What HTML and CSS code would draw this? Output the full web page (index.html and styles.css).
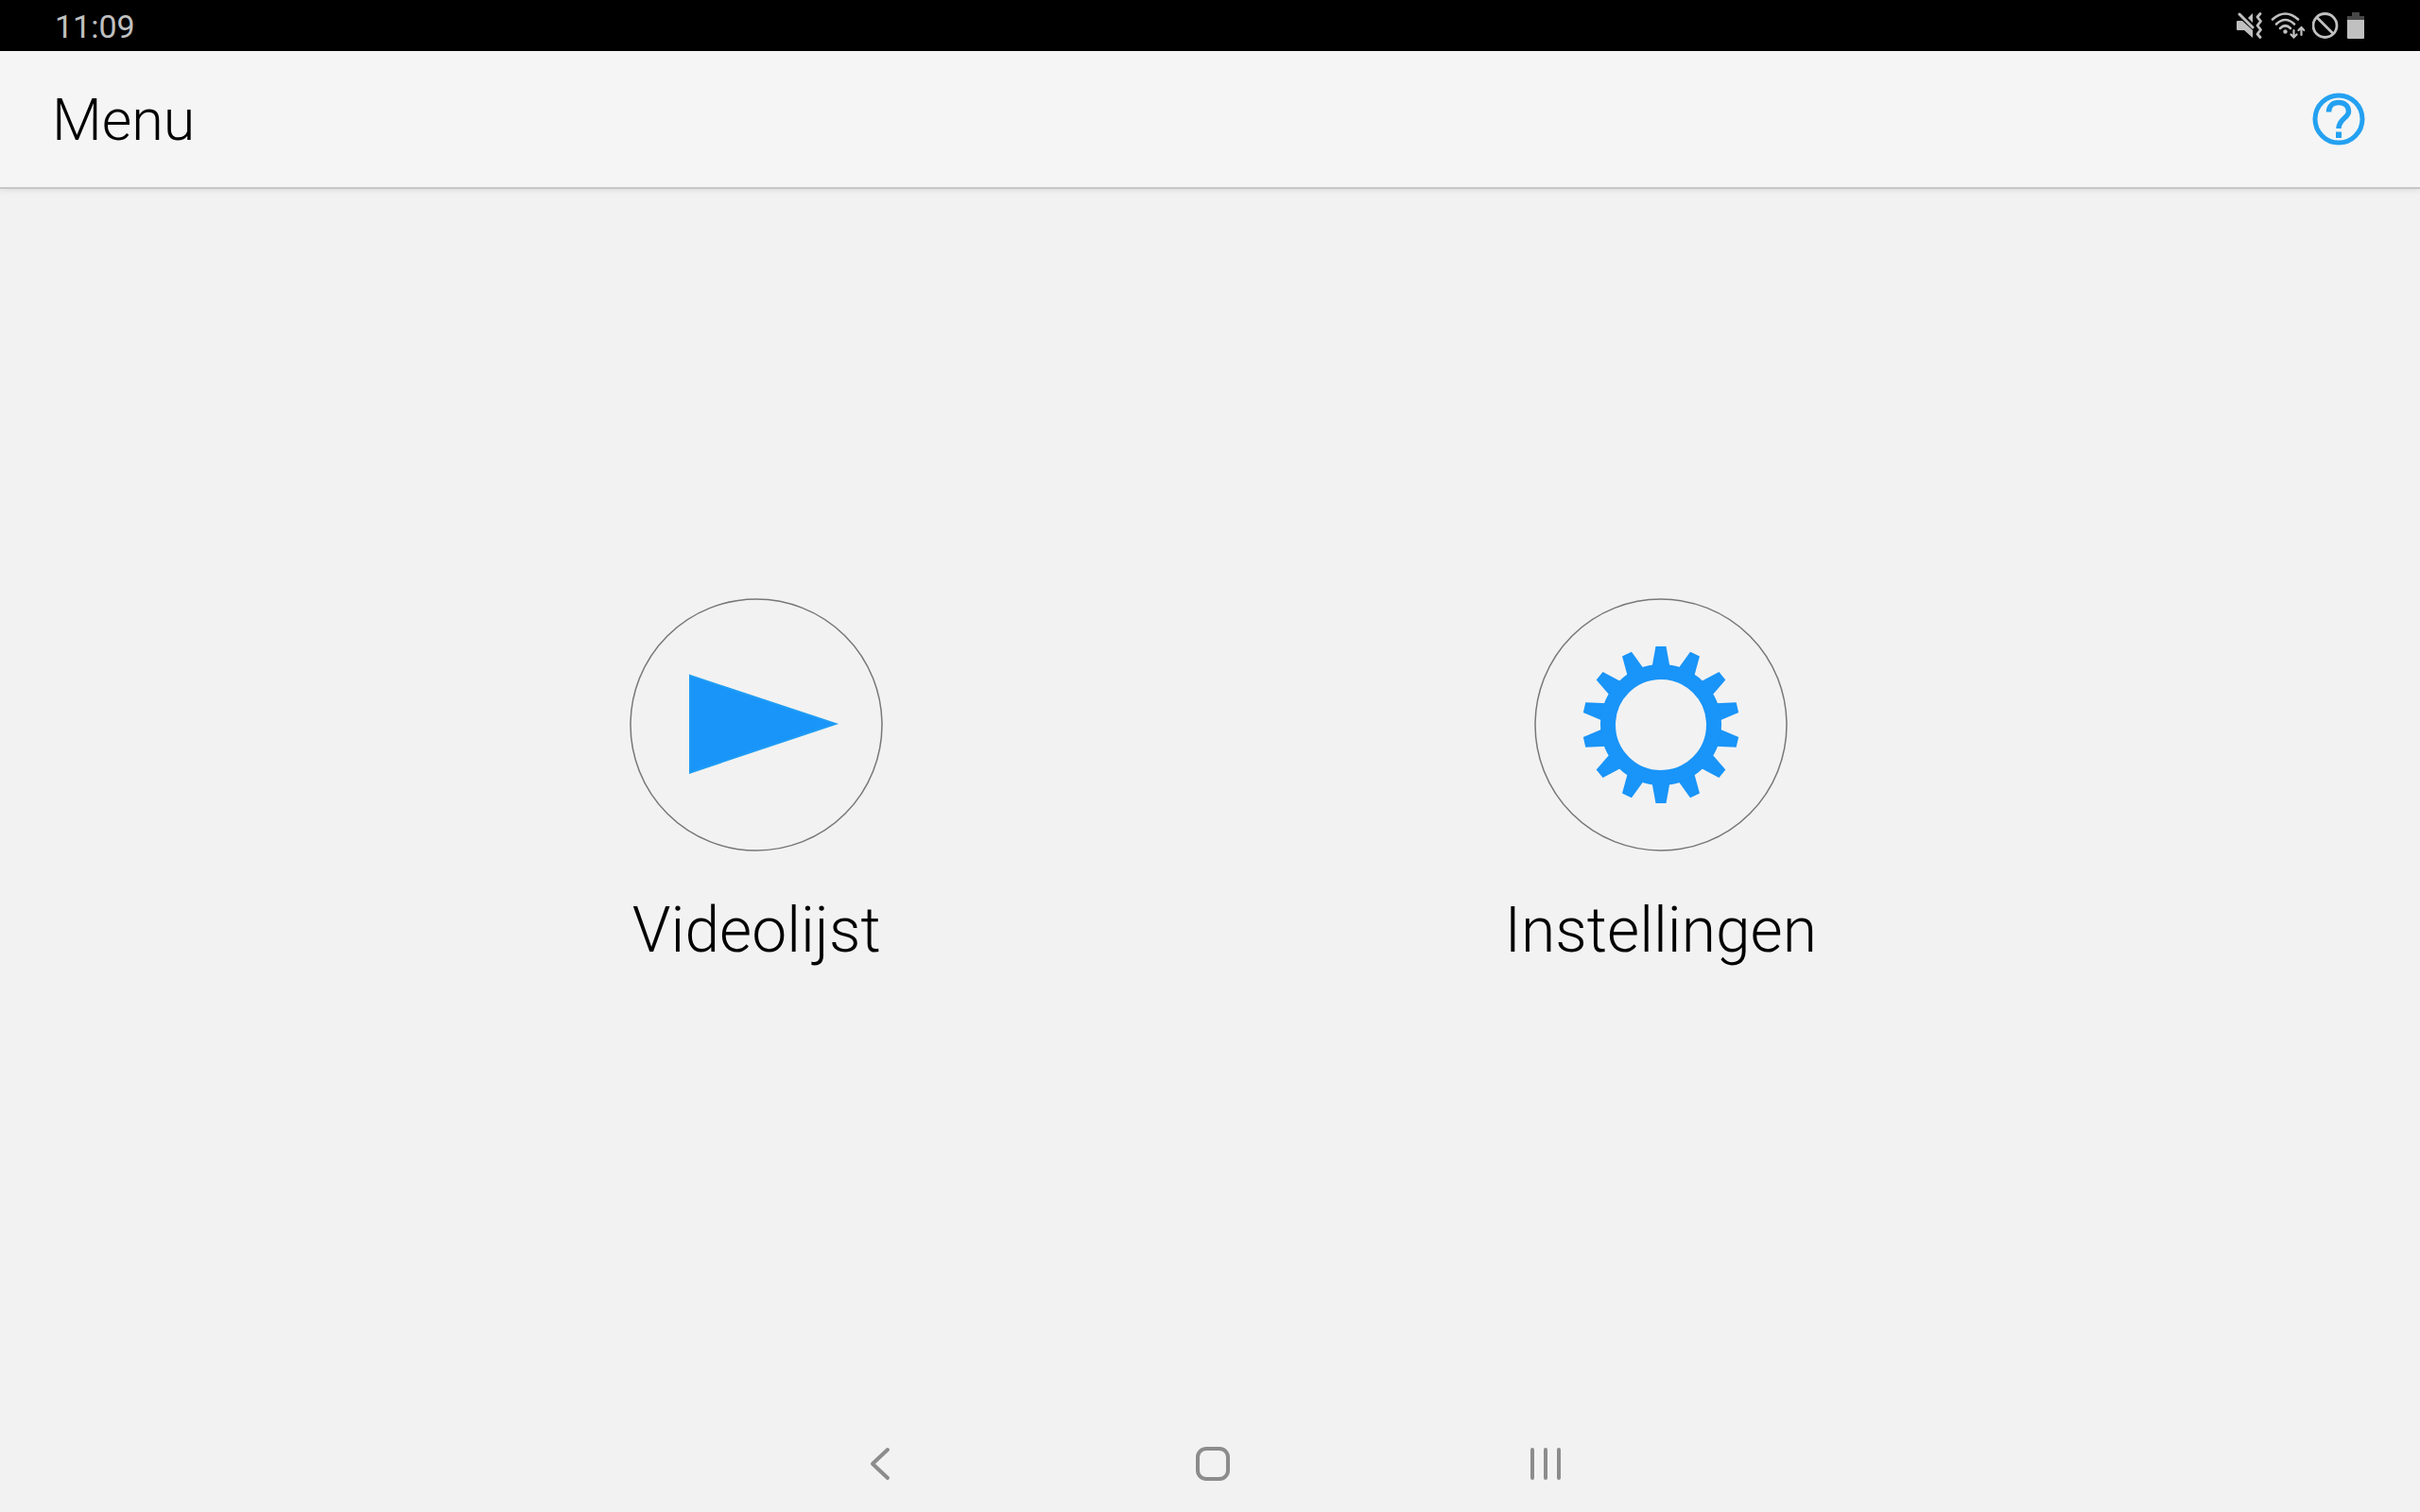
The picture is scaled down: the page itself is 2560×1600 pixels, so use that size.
FILE: index.html
```html
<!DOCTYPE html>
<html lang="nl">
<head>
  <meta charset="UTF-8" />
  <meta name="viewport" content="width=device-width, initial-scale=1" />
  <title>Menu</title>
  <link rel="stylesheet" href="styles.css">
</head>
<body>
  <div class="status-bar">
    <time class="clock">11:09</time>
    <div class="status-icons">
      <!-- muted / vibrate -->
      <svg width="28" height="28" viewBox="0 0 28 28" aria-hidden="true">
        <path d="M0 10q0-1 1-1h5L17 19V27L8 19H1q-1 0-1-1z" fill="#c0c0c0" />
        <path d="M17 1v10l-5-5z" fill="#c0c0c0" />
        <path d="M3 2l14 14" stroke="#c0c0c0" stroke-width="3" stroke-linecap="round" />
        <path d="M25 1.500L22 5l3.500 4.500L22 14l3.500 4.500L22 23l3 3.500" fill="none" stroke="#c0c0c0" stroke-width="2.800" stroke-linecap="round" stroke-linejoin="round" />
      </svg>
      <!-- wifi -->
      <svg width="36" height="28" viewBox="0 0 36 28" aria-hidden="true">
        <g fill="none" stroke="#c0c0c0" stroke-width="2.600" stroke-linecap="round">
          <path d="M2 7.500Q15.500-4.500 29 7.500" />
          <path d="M6 12.500Q15.500 3.500 25 12.500" />
          <path d="M10 17Q15.500 11.500 21 17" />
          <path d="M24.500 19v7M21.500 23.500l3 3 3-3M32.500 24v-7.500M29.500 19l3-3 3 3" stroke-width="2.200" />
        </g>
        <circle cx="15.500" cy="20.500" r="2.200" fill="#c0c0c0" />
      </svg>
      <!-- blocked -->
      <svg width="28" height="28" viewBox="0 0 28 28" aria-hidden="true">
        <circle cx="13.500" cy="14" r="12.500" fill="none" stroke="#c0c0c0" stroke-width="2.800" />
        <path d="M4.500 5l18 18" stroke="#c0c0c0" stroke-width="2.800" />
      </svg>
      <!-- battery -->
      <svg width="20" height="28" viewBox="0 0 20 28" aria-hidden="true">
        <path d="M6 0h8v4h5v4H1V4h5z" fill="#484848" />
        <path d="M1 8h18v19q0 1-1 1H2q-1 0-1-1z" fill="#c0c0c0" />
      </svg>
    </div>
  </div>

  <header class="app-bar">
    <h1 class="title">Menu</h1>
    <button type="button" class="help-btn" aria-label="Help">
      <svg width="56" height="56" viewBox="0 0 56 56" fill="none" stroke="#24a1f1" aria-hidden="true">
        <circle cx="28" cy="28" r="25" stroke-width="5" />
        <path d="M17.500 20.500C17.500 14 22 10.500 28 10.500S38.500 14 38.500 20C38.500 27 28 27.500 28 38" stroke-width="5.500" />
        <path d="M28 41.500v6.500" stroke-width="6" />
      </svg>
    </button>
  </header>

  <main class="menu">
    <a href="#" class="menu-item">
      <svg class="menu-icon" viewBox="0 0 268 268" aria-hidden="true">
        <circle class="ring" cx="134" cy="134" r="133" />
        <path class="shape edge" d="M64 82L218 133L64 184.500z" />
      </svg>
      <span class="menu-label">Videolijst</span>
    </a>
    <a href="#" class="menu-item">
      <svg class="menu-icon" viewBox="0 0 268 268" aria-hidden="true">
        <circle class="ring" cx="134" cy="134" r="133" />
        <g class="shape" transform="translate(134 134)">
          <path id="tooth" d="M-5.500-83h11L9.500-61h-19z" />
          <use href="#tooth" transform="rotate(25.714)" />
          <use href="#tooth" transform="rotate(51.429)" />
          <use href="#tooth" transform="rotate(77.143)" />
          <use href="#tooth" transform="rotate(102.857)" />
          <use href="#tooth" transform="rotate(128.571)" />
          <use href="#tooth" transform="rotate(154.286)" />
          <use href="#tooth" transform="rotate(180)" />
          <use href="#tooth" transform="rotate(205.714)" />
          <use href="#tooth" transform="rotate(231.429)" />
          <use href="#tooth" transform="rotate(257.143)" />
          <use href="#tooth" transform="rotate(282.857)" />
          <use href="#tooth" transform="rotate(308.571)" />
          <use href="#tooth" transform="rotate(334.286)" />
          <circle class="gear-body" r="56" />
        </g>
      </svg>
      <span class="menu-label">Instellingen</span>
    </a>
  </main>

  <nav class="nav-bar">
    <button type="button" class="nav-btn" aria-label="Terug">
      <svg width="36" height="36" viewBox="0 0 36 36" aria-hidden="true">
        <path d="M26 3L10 18l16 15" />
      </svg>
    </button>
    <button type="button" class="nav-btn" aria-label="Start">
      <svg width="36" height="36" viewBox="0 0 36 36" aria-hidden="true">
        <rect x="2" y="2" width="32" height="32" rx="9" />
      </svg>
    </button>
    <button type="button" class="nav-btn" aria-label="Recent">
      <svg width="36" height="36" viewBox="0 0 36 36" aria-hidden="true">
        <path d="M4 3v30M18 3v30M32 3v30" />
      </svg>
    </button>
  </nav>
</body>
</html>
```
FILE: styles.css
```css
* {
  margin: 0;
  padding: 0;
  box-sizing: border-box;
}

body {
  font-family: Roboto, sans-serif;
  background-color: #f2f2f2;
  color: #000;
  min-height: 100vh;
  display: flex;
  flex-direction: column;
}

svg {
  display: block;
}

button {
  border: none;
  background: none;
  cursor: pointer;
}

.status-bar {
  display: flex;
  justify-content: space-between;
  align-items: center;
  height: 54px;
  padding: 0 58px;
  background-color: #000;
}

.clock {
  padding-top: 2px;
  font-size: 34px;
  line-height: 40px;
  color: #c0c0c0;
}

.status-icons {
  display: flex;
  gap: 8px;
}

.app-bar {
  display: flex;
  justify-content: space-between;
  align-items: center;
  height: 146px;
  padding: 0 58px 0 55px;
  background-color: #f5f5f5;
  border-bottom: 2px solid #c6c6c6;
  box-shadow: 0 2px 6px rgba(0, 0, 0, 0.08);
}

.title {
  padding-top: 2px;
  font-size: 61px;
  line-height: 72px;
  font-weight: 300;
}

.menu {
  flex-grow: 1;
  display: flex;
  align-items: center;
  padding: 0 325px 40px 322px;
}

.menu-item {
  flex: 1;
  display: flex;
  flex-direction: column;
  align-items: center;
  gap: 44px;
  color: #000;
  text-decoration: none;
}

.menu-icon {
  width: 268px;
  height: 268px;
}

.ring {
  fill: none;
  stroke: #777;
  stroke-width: 1.5;
}

.shape {
  fill: #1994f8;
}

.edge {
  stroke: #1f9df4;
  stroke-width: 2;
}

.gear-body {
  fill: none;
  stroke: #1994f8;
  stroke-width: 16;
}

.menu-label {
  font-size: 66px;
  line-height: 80px;
  font-weight: 300;
}

.nav-bar {
  display: flex;
  justify-content: center;
  height: 102px;
  padding-left: 6px;
}

.nav-btn {
  display: flex;
  justify-content: center;
  align-items: center;
  width: 352px;
}

.nav-btn svg {
  fill: none;
  stroke: #8c8c8c;
  stroke-width: 4;
  stroke-linecap: round;
  stroke-linejoin: round;
}
```
